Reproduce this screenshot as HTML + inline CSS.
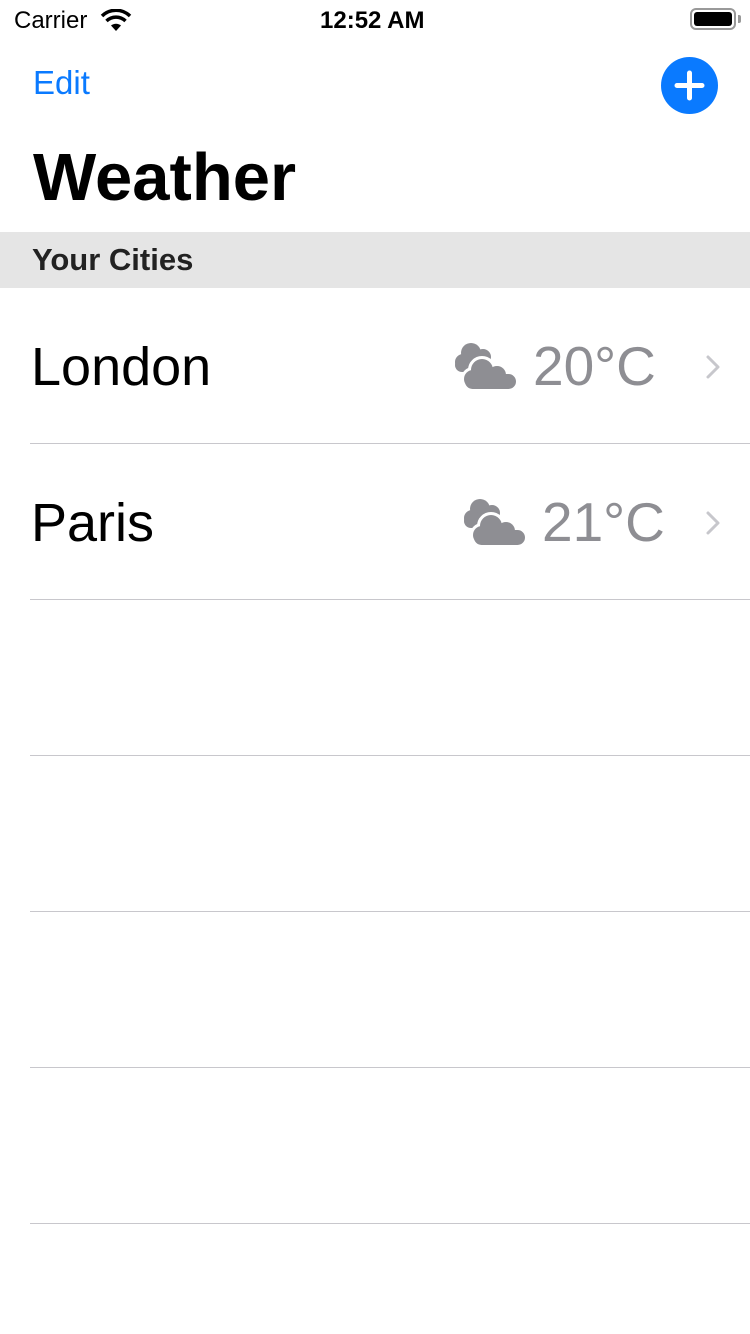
<!DOCTYPE html>
<html><head><meta charset="utf-8"><style>
*{margin:0;padding:0;box-sizing:border-box}
body{width:750px;height:1334px;background:#fff;font-family:"Liberation Sans",sans-serif;position:relative;overflow:hidden}
.a{position:absolute;white-space:nowrap}
.sep{position:absolute;left:30px;right:0;height:1px;background:#c8c7cc}
.city{font-size:54px;color:#000;left:31px;line-height:1}
.temp{font-size:55px;color:#8e8e93;line-height:1}
</style></head><body>
<svg width="0" height="0" style="position:absolute"><defs>
<g id="front"><circle cx="30" cy="30" r="11"/><circle cx="45" cy="35" r="9"/><circle cx="21" cy="39" r="9"/><rect x="13" y="34" width="51" height="15" rx="7.5"/></g>
<g id="cl"><g fill="#8e8e93"><circle cx="19" cy="13" r="10"/><circle cx="31" cy="17" r="8"/><circle cx="11" cy="22" r="8"/><rect x="3" y="18" width="36" height="14" rx="7"/></g>
<use href="#front" fill="#fff" stroke="#fff" stroke-width="6"/><use href="#front" fill="#8e8e93"/></g>
</defs></svg>
<div class="a" style="left:14px;top:7px;font-size:24px">Carrier</div>
<svg class="a" style="left:100px;top:9px" width="32" height="24" viewBox="0 0 32 24"><path d="M16 22 L11 16.5 A8 8 0 0 1 21 16.5 Z" fill="#000"/><path d="M6.5 12 A13.5 13.5 0 0 1 25.5 12" stroke="#000" stroke-width="3.5" fill="none"/><path d="M2 7 A20 20 0 0 1 30 7" stroke="#000" stroke-width="3.5" fill="none"/></svg>
<div class="a" style="left:320px;top:7px;font-size:24px;font-weight:bold">12:52 AM</div>
<div class="a" style="left:690px;top:8px;width:46px;height:22px;border:2px solid #999;border-radius:6px"></div>
<div class="a" style="left:694px;top:12px;width:38px;height:14px;background:#000;border-radius:3px"></div>
<div class="a" style="left:738px;top:15px;width:3px;height:8px;background:#999;border-radius:0 2px 2px 0"></div>
<div class="a" style="left:33px;top:64px;font-size:33px;color:#0a7aff">Edit</div>
<svg class="a" style="left:661px;top:57px" width="57" height="57" viewBox="0 0 57 57"><circle cx="28.5" cy="28.5" r="28.5" fill="#0a7aff"/><path d="M28.5 16V41M16 28.5H41" stroke="#fff" stroke-width="5" stroke-linecap="round"/></svg>
<div class="a" style="left:33px;top:141px;font-size:67px;font-weight:bold;line-height:1.1">Weather</div>
<div class="a" style="left:0;top:232px;width:750px;height:56px;background:#e5e5e5"></div>
<div class="a" style="left:32px;top:242px;font-size:31px;font-weight:bold;color:#222">Your Cities</div>

<div class="a city" style="top:340px">London</div>
<svg class="a" style="left:452px;top:340px" width="66" height="50" viewBox="0 0 66 50"><use href="#cl"/></svg>
<div class="a temp" style="left:533px;top:339px">20°C</div>
<svg class="a" style="left:704px;top:354px" width="18" height="26" viewBox="0 0 18 26"><path d="M4 3 L14 13 L4 23" stroke="#c7c7cc" stroke-width="3" fill="none" stroke-linecap="round" stroke-linejoin="round"/></svg>
<div class="sep" style="top:443px"></div>

<div class="a city" style="top:496px">Paris</div>
<svg class="a" style="left:461px;top:496px" width="66" height="50" viewBox="0 0 66 50"><use href="#cl"/></svg>
<div class="a temp" style="left:542px;top:495px">21°C</div>
<svg class="a" style="left:704px;top:510px" width="18" height="26" viewBox="0 0 18 26"><path d="M4 3 L14 13 L4 23" stroke="#c7c7cc" stroke-width="3" fill="none" stroke-linecap="round" stroke-linejoin="round"/></svg>
<div class="sep" style="top:599px"></div>
<div class="sep" style="top:755px"></div>
<div class="sep" style="top:911px"></div>
<div class="sep" style="top:1067px"></div>
<div class="sep" style="top:1223px"></div>
</body></html>
